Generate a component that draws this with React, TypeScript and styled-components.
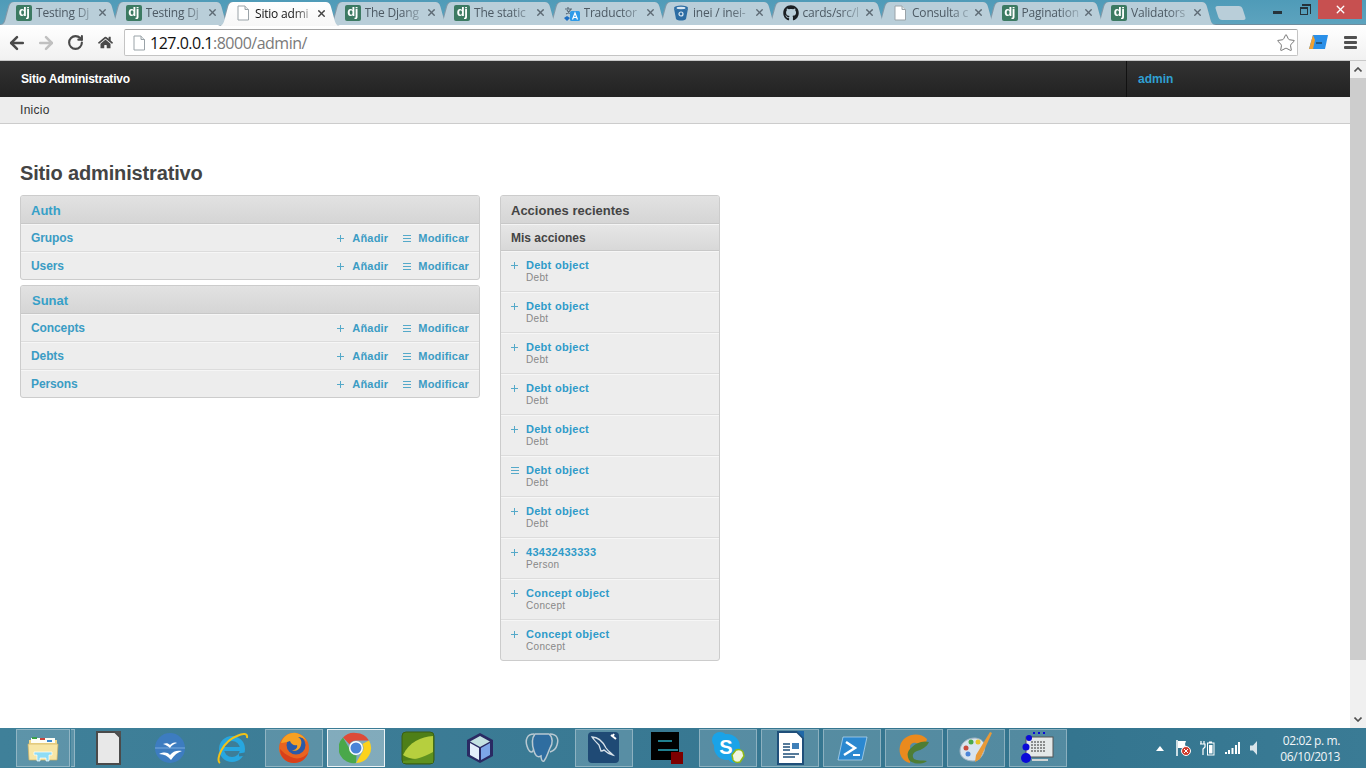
import React from 'react';
import styled, { createGlobalStyle, css } from 'styled-components';
import { ArrowLeft, ArrowRight, RotateCw, Star, X } from 'lucide-react';
import { FaGithub, FaHome } from 'react-icons/fa';

const GlobalStyle = createGlobalStyle`
	html, body {
		margin: 0;
		height: 100%;
		overflow: hidden;
		background: #fff;
		font-family: "Liberation Sans", Arial, sans-serif;
	}
	* { box-sizing: border-box; }
`;

const Screen = styled.div`
	display: flex;
	flex-direction: column;
	height: 100vh;
`;

/* ---------- browser chrome ---------- */
const TabStrip = styled.div`
	display: flex;
	height: 25px;
	background: linear-gradient(#4f9bb8, #5da3be);
	border-bottom: 1px solid #6f8d9e;
`;
const Tabs = styled.div`
	display: flex;
	padding-top: 1px;
	filter: drop-shadow(0.6px 0 0 #7f98a8) drop-shadow(-0.6px 0 0 #7f98a8);
`;
const Tab = styled.div<{ $active?: boolean }>`
	position: relative;
	display: flex;
	align-items: center;
	flex: none;
	width: 121px;
	height: 24px;
	margin-right: -11.5px;
	padding: 0 13px 1px 16px;
	background: #b9ced9;
	clip-path: path('M0 24 C4 24 5 21 6 17 L9 6 C10 2 12 1 15 1 L106 1 C109 1 111 2 112 6 L115 17 C116 21 117 24 121 24 Z');
	${p =>
		p.$active &&
		css`
			z-index: 2;
			height: 25px;
			margin-bottom: -1px;
			background: linear-gradient(#fff, #f7f7f7);
			clip-path: path('M0 25 C4 25 5 21 6 17 L9 6 C10 2 12 1 15 1 L106 1 C109 1 111 2 112 6 L115 17 C116 21 117 25 121 25 Z');
		`}
`;
const TabTitle = styled.span<{ $active?: boolean }>`
	flex: 1;
	min-width: 0;
	margin-left: 4px;
	white-space: nowrap;
	font: 12px 'Open Sans', sans-serif;
	letter-spacing: -0.2px;
	color: ${p => (p.$active ? '#111' : '#4d5a64')};
	mask-image: linear-gradient(to right, #000 65%, rgba(0, 0, 0, 0.25) 100%);
`;
const TabClose = styled.span<{ $active?: boolean }>`
	display: flex;
	flex: none;
	margin-left: 4px;
	color: ${p => (p.$active ? '#444' : '#5d6a74')};
`;
const DjIcon = styled.span`
	flex: none;
	width: 16px;
	height: 16px;
	border-radius: 2px;
	background: #3c7a62;
	color: #fff;
	font: bold 13px/14px 'Liberation Sans', sans-serif;
	text-align: center;
	letter-spacing: -0.5px;
`;
const NewTab = styled.div`
	flex: none;
	width: 27px;
	height: 14px;
	margin: 6px 0 0 12px;
	border-radius: 3px;
	background: #b9ced9;
	transform: skewX(18deg);
`;
const WindowControls = styled.div`
	display: flex;
	align-items: flex-start;
	margin-left: auto;
	margin-right: 4px;
`;
const WindowButton = styled.div<{ $close?: boolean }>`
	display: flex;
	align-items: center;
	justify-content: center;
	height: 19px;
	width: ${p => (p.$close ? '44px' : '27px')};
	background: ${p => (p.$close ? '#c75050' : 'transparent')};
	color: #fff;
`;
const MinGlyph = styled.span`
	width: 9px;
	height: 3px;
	margin-top: 5px;
	background: #26333a;
`;
const MaxGlyph = styled.span`
	position: relative;
	width: 8px;
	height: 8px;
	margin: 3px 0 0 -2px;
	border: 1px solid #26333a;
	border-top-width: 2px;
	&::after {
		content: '';
		position: absolute;
		left: 1px;
		top: -5px;
		width: 8px;
		height: 8px;
		border: 1px solid #26333a;
		border-top-width: 2px;
		border-left: 0;
		border-bottom: 0;
	}
`;

const Toolbar = styled.div`
	display: flex;
	align-items: flex-start;
	height: 36px;
	padding: 4px 9px 0 2px;
	background: linear-gradient(#fff, #f1f1f1);
	border-bottom: 1px solid #c8c8c8;
`;
const NavButton = styled.span<{ $off?: boolean }>`
	display: flex;
	align-items: center;
	justify-content: center;
	flex: none;
	width: 29.5px;
	height: 27px;
	color: ${p => (p.$off ? '#c0c0c0' : '#4a4a4a')};
`;
const AddressBar = styled.div`
	display: flex;
	align-items: center;
	flex: 1;
	height: 27px;
	margin: 0 10px 0 4px;
	padding: 0 1px 0 6px;
	background: #fff;
	border: 1px solid #c4c4c4;
	border-top-color: #a4a4a4;
	border-radius: 2px;
	font: 16px 'Open Sans', sans-serif;
	letter-spacing: -0.5px;
`;
const UrlHost = styled.span`
	margin-left: 3px;
	color: #111;
`;
const UrlPath = styled.span`
	color: #7a7a7a;
`;
const StarSlot = styled.span`
	display: flex;
	margin-left: auto;
	color: #777;
`;
const ExtensionSlot = styled.span`
	display: flex;
	flex: none;
	margin-top: 5px;
`;
const MenuBars = styled.span`
	display: flex;
	flex-direction: column;
	gap: 2px;
	width: 13px;
	margin: 7px 0 0 16px;
	& > i {
		height: 3px;
		background: #505050;
		border-radius: 1px;
	}
`;

/* ---------- admin page ---------- */
const Viewport = styled.div`
	display: flex;
	flex: 1;
	min-height: 0;
`;
const Page = styled.div`
	flex: 1;
	min-width: 0;
	background: #fff;
`;
const AdminHeader = styled.header`
	display: flex;
	align-items: center;
	height: 36px;
	background: linear-gradient(#333, #222);
	font-weight: bold;
	font-size: 12px;
`;
const Branding = styled.div`
	flex: 1;
	padding-left: 21px;
	letter-spacing: -0.2px;
	color: #fff;
`;
const UserTools = styled.div`
	align-self: stretch;
	display: flex;
	align-items: center;
	width: 224px;
	padding-left: 11px;
	border-left: 1px solid #111;
	color: #30a0d3;
`;
const Breadcrumbs = styled.div`
	height: 27px;
	padding: 6px 20px 0;
	background: #ededed;
	border-bottom: 1px solid #ccc;
	font-size: 12px;
	line-height: 14px;
	letter-spacing: 0.3px;
	color: #333;
`;
const Content = styled.main`
	padding: 37px 20px 0;
`;
const Title = styled.h1`
	margin: 0 0 10px;
	font-size: 20px;
	line-height: 24px;
	font-weight: bold;
	letter-spacing: -0.15px;
	color: #444;
`;
const Columns = styled.div`
	display: flex;
	align-items: flex-start;
	gap: 20px;
`;
const ModuleColumn = styled.div`
	display: flex;
	flex-direction: column;
	gap: 5px;
	width: 460px;
`;
const Module = styled.section`
	border: 1px solid #ccc;
	border-radius: 3px;
	background: #ededed;
	overflow: hidden;
`;
const ModuleHead = styled.h2<{ $dark?: boolean; $inset?: number }>`
	display: flex;
	align-items: center;
	height: 28px;
	margin: 0;
	padding: 1px 10px 0 ${p => p.$inset ?? 10}px;
	background: linear-gradient(#e2e2e2, #d5d5d5);
	border-bottom: 1px solid #c8c8c8;
	font-size: 13px;
	font-weight: bold;
	color: ${p => (p.$dark ? '#444' : '#36a0c8')};
`;
const ModuleSubHead = styled.h3`
	display: flex;
	align-items: center;
	height: 27px;
	margin: 0;
	padding: 0 10px;
	background: linear-gradient(#e6e6e6, #d8d8d8);
	border-top: 1px solid #f4f4f4;
	border-bottom: 1px solid #c8c8c8;
	font-size: 12px;
	font-weight: bold;
	color: #444;
`;
const ModelRow = styled.div`
	display: flex;
	align-items: center;
	height: 28px;
	padding: 0 10px;
	border-top: 1px solid #f6f6f6;
	border-bottom: 1px solid #dcdcdc;
	&:last-child {
		height: 27px;
		border-bottom: 0;
	}
`;
const ModelName = styled.span`
	flex: 1;
	font-size: 12px;
	font-weight: bold;
	letter-spacing: -0.1px;
	color: #3b9cc4;
`;
const RowAction = styled.span<{ $wide?: boolean }>`
	display: flex;
	align-items: center;
	margin-left: ${p => (p.$wide ? '15px' : '0')};
	font-size: 11px;
	font-weight: bold;
	letter-spacing: 0.2px;
	color: #3b9cc4;
`;
const ActionGlyph = styled.svg<{ $gap: number }>`
	display: block;
	flex: none;
	margin-right: ${p => p.$gap}px;
	stroke: #55a9c9;
	stroke-width: 1;
	fill: none;
`;
const RecentColumn = styled.div`
	width: 220px;
`;
const RecentItem = styled.div`
	display: grid;
	grid-template-columns: 15px 1fr;
	align-content: start;
	height: 41px;
	padding: 7px 10px 0;
	border-top: 1px solid #f6f6f6;
	border-bottom: 1px solid #dcdcdc;
	&:last-child {
		height: 40px;
		border-bottom: 0;
	}
`;
const RecentGlyph = styled.span`
	display: flex;
	align-items: center;
	height: 13px;
`;
const RecentTitle = styled.span`
	font-size: 11px;
	line-height: 13px;
	font-weight: bold;
	letter-spacing: 0.28px;
	color: #2f9bc9;
`;
const RecentType = styled.span`
	grid-column: 2;
	font-size: 10px;
	line-height: 11px;
	letter-spacing: 0.3px;
	color: #888;
`;

const ScrollBar = styled.div`
	display: flex;
	flex-direction: column;
	flex: none;
	width: 16px;
	background: #f0f0f0;
`;
const ScrollArrow = styled.div<{ $end?: boolean }>`
	display: flex;
	align-items: center;
	justify-content: center;
	flex: none;
	height: 17px;
	margin-top: ${p => (p.$end ? 'auto' : '0')};
`;
const ScrollThumb = styled.div`
	flex: none;
	height: 582px;
	background: #cdcdcd;
`;

/* ---------- taskbar ---------- */
const Taskbar = styled.footer`
	display: flex;
	align-items: center;
	flex: none;
	height: 40px;
	padding-left: 16px;
	background: linear-gradient(90deg, #3f8099, #3a7a94 40%, #33748e 75%, #3a7b95);
`;
const TaskSlot = styled.div<{ $state?: 'open' | 'focus'; $narrow?: boolean }>`
	display: flex;
	align-items: center;
	justify-content: center;
	flex: none;
	width: ${p => (p.$narrow ? '54px' : '58px')};
	height: 38px;
	margin-right: ${p => (p.$narrow ? '1px' : '4px')};
	${p =>
		p.$state === 'open' &&
		css`
			background: rgba(255, 255, 255, 0.16);
			border: 1px solid rgba(255, 255, 255, 0.32);
		`}
	${p =>
		p.$state === 'focus' &&
		css`
			background: rgba(255, 255, 255, 0.36);
			border: 1px solid rgba(255, 255, 255, 0.85);
		`}
`;
const TaskStack = styled.div`
	flex: none;
	width: 4px;
	height: 38px;
	margin-right: 4px;
	background: rgba(255, 255, 255, 0.16);
	border: 1px solid rgba(255, 255, 255, 0.32);
	border-left: 0;
`;
const Tray = styled.div`
	display: flex;
	align-items: center;
	margin-left: auto;
	height: 100%;
`;
const TrayIcon = styled.span<{ $gap: number }>`
	display: flex;
	margin-left: ${p => p.$gap}px;
	color: #fff;
`;
const Clock = styled.div`
	width: 88px;
	margin-left: 20px;
	padding: 1px 26px 0 0;
	white-space: nowrap;
	text-align: right;
	font: 12px/16px 'Open Sans', sans-serif;
	letter-spacing: -0.4px;
	color: #f2f6f8;
`;

const DocFavicon = ({ size = 16 }: { size?: number }) => (
	<svg width={size} height={size} viewBox="0 0 16 16" style={{ flex: 'none' }}>
		<path d="M3 1h7l3.500 3.500V15H3z" fill="#fff" stroke="#9aa3a8" />
		<path d="M10 1v3.500h3.500" fill="#e6e9ea" stroke="#9aa3a8" />
	</svg>
);
const TranslateFavicon = () => (
	<svg width="16" height="16" viewBox="0 0 16 16" style={{ flex: 'none' }}>
		<path d="M1 4h7M4 2v2M2 9c3-1 4-3 5-5M3 5c1 2 2 3 4 4" stroke="#5b6b78" strokeWidth="1.200" fill="none" />
		<rect x="6" y="6" width="10" height="10" rx="1.500" fill="#2f9be8" />
		<path d="M8.500 14.500L11 8l2.500 6.500M9.500 12.500h3" stroke="#fff" strokeWidth="1.200" fill="none" />
		<path d="M0 13l3-2 3 2-3 3z" fill="#1d6fc4" />
	</svg>
);
const BucketFavicon = () => (
	<svg width="16" height="16" viewBox="0 0 16 16" style={{ flex: 'none' }}>
		<ellipse cx="8" cy="3" rx="7" ry="2.500" fill="#2b6ca3" />
		<path d="M1 3.500l2 10.500c2 2 8 2 10 0l2-10.500c-3 2-11 2-14 0z" fill="#2b6ca3" />
		<ellipse cx="8" cy="3" rx="4.500" ry="1.200" fill="#dbe8f2" />
		<circle cx="8" cy="9" r="2" fill="none" stroke="#dbe8f2" strokeWidth="1.200" />
	</svg>
);

const Shot = { width: 34, height: 34, viewBox: '0 0 34 34' };

const ExplorerIcon = () => (
	<svg {...Shot}>
		<path d="M3 9h28v20H3z" fill="#f1d98a" />
		<path d="M5 7h24v5H5z" fill="#fdfdf5" />
		<path d="M6 6h5v2H6z" fill="#3aa04a" />
		<path d="M14 7h5v2h-5z" fill="#c8443c" />
		<path d="M21 9h5v2h-5z" fill="#3d8ad0" />
		<path d="M2 13h30l-1 16H3z" fill="#f7e6a6" stroke="#cfb264" strokeWidth=".7" />
		<path d="M8 21h18v3h-3v6h-3v-3h-6v3h-3v-6H8z" fill="#8fdcf5" stroke="#fff" strokeWidth=".7" />
	</svg>
);
const LibreIcon = () => (
	<svg {...Shot}>
		<path d="M6 1h18l5 5v27H6z" fill="#e8e8e8" stroke="#4a4a4a" strokeWidth="2" />
		<path d="M24 0h6v6z" fill="#505050" />
	</svg>
);
const OfficeIcon = () => (
	<svg {...Shot}>
		<circle cx="17" cy="17" r="15" fill="#3d7cc0" />
		<path d="M2 17h30" stroke="#79aadd" strokeWidth="1" />
		<path d="M6 23c5-2 8-2 11 1 3-4 7-5 12-4-4 1-8 4-11 9-3-4-7-6-12-6z" fill="#fff" />
		<path d="M10 13c3-1 5-1 7 1 2-2 4-3 7-2-3 1-5 2-7 5-2-2-4-3-7-4z" fill="#fff" />
	</svg>
);
const IeIcon = () => (
	<svg {...Shot}>
		<circle cx="17" cy="18" r="10.500" fill="none" stroke="#27a7e0" strokeWidth="5" />
		<path d="M9 18h18" stroke="#27a7e0" strokeWidth="4" />
		<path d="M24 24l6-1" stroke="#3a7a94" strokeWidth="3" />
		<path d="M5 32C0 29 8 10 22 5c6-3 11-3 10 2" fill="none" stroke="#f2c218" strokeWidth="2" />
	</svg>
);
const FirefoxIcon = () => (
	<svg {...Shot}>
		<circle cx="17" cy="17" r="15" fill="#e8631f" />
		<circle cx="19" cy="14" r="9.500" fill="#2a5aa8" />
		<path d="M4 12c2-7 9-11 15-10 5 1 9 4 11 9-3-4-6-5-9-5 3 2 4 4 3 8-1 5-6 7-10 5 4 1 7-2 6-5-3 1-6-1-7-4-2 1-3 1-9 2z" fill="#f7a021" />
		<path d="M3 18c0 8 6 14 14 14 7 0 12-4 14-10-4 5-11 7-17 4-5-2-8-5-11-8z" fill="#d8401a" />
	</svg>
);
const ChromeIcon = () => (
	<svg {...Shot}>
		<path d="M17 2a15 15 0 0 1 13 7.500H17a7.500 7.500 0 0 0-6.500 3.700L4 6.500A15 15 0 0 1 17 2z" fill="#dd4b39" />
		<path d="M30 9.500A15 15 0 0 1 17 32l6.500-11.300A7.500 7.500 0 0 0 23.500 13L30 9.500z" fill="#fcd21c" />
		<path d="M17 32A15 15 0 0 1 4 6.500l6.500 11.300a7.500 7.500 0 0 0 7 6.700z" fill="#4aa84a" />
		<circle cx="17" cy="17" r="7" fill="#fff" />
		<circle cx="17" cy="17" r="5.500" fill="#4a84d8" />
	</svg>
);
const LeafIcon = () => (
	<svg {...Shot}>
		<rect x="1" y="1" width="32" height="32" rx="4" fill="#4e7f18" stroke="#3a5f12" />
		<path d="M2 24C8 11 20 6 32 5v20c-10 3-22 5-30-1z" fill="#b6cf3e" />
		<path d="M2 30c9-1 20-3 30-9v11H2z" fill="#5f9220" />
	</svg>
);
const CubeIcon = () => (
	<svg {...Shot}>
		<path d="M17 2l13 7v16l-13 7-13-7V9z" fill="#2a2a63" />
		<path d="M17 5l10 5.500-10 5.500-10-5.500z" fill="#c4e2e2" />
		<path d="M7 12l9 5v12l-9-5z" fill="#e4eefa" />
		<path d="M18 17l9-5v12l-9 5z" fill="#7da6e8" />
	</svg>
);
const ElephantIcon = () => (
	<svg {...Shot}>
		<path d="M9 3C2 3 0 9 2 15c1 4 4 8 6 5 1-2 1-4 2-6M25 3c7 0 9 5 7 11-1 4-4 6-7 7" fill="none" stroke="#b9c9d2" strokeWidth="1.500" />
		<path d="M10 3h14c4 3 4 10 1 14-2 4-3 9-6 13-2 1-3-2-3-5-4 2-6-1-7-5-2-6-3-12 1-17z" fill="#2f6da0" stroke="#b9c9d2" strokeWidth="1.500" />
	</svg>
);
const MysqlIcon = () => (
	<svg {...Shot}>
		<rect x="1" y="1" width="31" height="31" rx="4" fill="#1f4a75" />
		<path d="M5 6c6 0 11 5 14 11 2 3 5 5 7 7-4-1-7-3-9-5-1 1-2 1-3 1l-2-6C9 11 7 9 5 6z" fill="none" stroke="#d8e2ea" strokeWidth="1.300" />
		<path d="M24 4l5 4M27 3l-2 3" stroke="#fff" strokeWidth="2" />
	</svg>
);
const BlackIcon = () => (
	<svg {...Shot}>
		<rect x="2" y="1" width="28" height="28" fill="#000" />
		<rect x="9" y="9" width="14" height="2" fill="#1f7f8f" />
		<rect x="9" y="18" width="20" height="2" fill="#1f7f8f" />
		<rect x="22" y="21" width="12" height="12" fill="#7d0000" />
	</svg>
);
const SkypeIcon = () => (
	<svg {...Shot}>
		<circle cx="9" cy="9" r="8" fill="#1aa3e8" />
		<circle cx="24" cy="24" r="8" fill="#1aa3e8" />
		<circle cx="16" cy="16" r="13" fill="#1aa3e8" />
		<text x="15" y="23" textAnchor="middle" fontFamily="Liberation Sans" fontWeight="bold" fontSize="20" fill="#fff">S</text>
		<path d="M21 24l4-5c3-1 6 0 7 2l1 4-4 6c-3 1-6 0-7-2z" fill="#f2f5e0" stroke="#8fb817" strokeWidth="1.500" />
	</svg>
);
const WriterIcon = () => (
	<svg {...Shot}>
		<path d="M5 1h19l6 6v26H5z" fill="#fff" stroke="#1f4f7a" strokeWidth="2" />
		<path d="M24 0h7v7z" fill="#1f68a8" />
		<path d="M10 13h7M10 16h7M10 19h7" stroke="#1f4f7a" strokeWidth="1.500" />
		<rect x="19" y="12" width="7" height="6" fill="#3f7fb8" />
		<path d="M10 23h16M10 26h12" stroke="#1f4f7a" strokeWidth="1.500" />
	</svg>
);
const PowerShellIcon = () => (
	<svg {...Shot}>
		<path d="M8 6h24l-5 23H3z" fill="#2b88d0" stroke="#bcdcf4" strokeWidth=".7" />
		<path d="M11 11l9 6-11 7" fill="none" stroke="#fff" strokeWidth="2.500" />
		<path d="M18 24h7" stroke="#fff" strokeWidth="2" />
	</svg>
);
const PycharmIcon = () => (
	<svg {...Shot}>
		<path d="M30 8C22 0 6 3 3 15c-2 8 3 16 10 17V16c0-3 3-5 6-4l9 3z" fill="#ea8a1e" />
		<path d="M13 18c5-6 13-9 19-7-2 5-8 8-12 9-3 1-6 4-3 8 3 2 9 1 13 2-5 4-15 3-18-1-2-4-2-8 1-11z" fill="#4e7d35" />
	</svg>
);
const PaintIcon = () => (
	<svg {...Shot}>
		<path d="M16 7C7 7 1 13 1 20c0 7 7 10 13 10 5 0 8-3 10-7 3-6 3-15-8-16z" fill="#d8e4ee" stroke="#9fb3c2" />
		<circle cx="7" cy="17" r="2.500" fill="#c84a3c" />
		<circle cx="12" cy="11" r="2.500" fill="#4aa84a" />
		<circle cx="19" cy="11" r="2.500" fill="#e8c428" />
		<circle cx="9" cy="23" r="2.500" fill="#4a84d8" />
		<path d="M31 1l2 1-12 26-5 3 1-7z" fill="#e89a38" />
	</svg>
);
const DiagramIcon = () => (
	<svg {...Shot}>
		<rect x="5" y="6" width="27" height="20" fill="#e4e8e8" stroke="#555" />
		<path d="M10 11h15M10 14h15M10 17h15M10 20h15" stroke="#333" strokeDasharray="2 1" />
		<path d="M11 28h16v2H11z" fill="#cfd4d4" />
		<circle cx="8" cy="7" r="3" fill="#0a0ad8" />
		<circle cx="5" cy="16" r="3.500" fill="#0a0ad8" />
		<circle cx="5" cy="27" r="5" fill="#0a0ad8" />
		<path d="M12 2h2M17 2h2M22 2h2" stroke="#0a0ad8" strokeWidth="2" />
	</svg>
);

const FlagTray = () => (
	<svg width="16" height="18" viewBox="0 0 16 18">
		<path d="M2 1v16" stroke="#fff" strokeWidth="1.500" />
		<path d="M3 2h8l-1 3 1 4H3z" fill="#fff" />
		<circle cx="11" cy="12" r="4.500" fill="#d03a2c" stroke="#fff" />
		<path d="M9 10l4 4M13 10l-4 4" stroke="#fff" />
	</svg>
);
const PowerTray = () => (
	<svg width="16" height="16" viewBox="0 0 16 16">
		<path d="M2 1v3M5 1v3M1 4h5v3L4 9v6" stroke="#fff" strokeWidth="1.200" fill="none" />
		<rect x="8.500" y="3" width="6.500" height="12" fill="none" stroke="#fff" />
		<rect x="10" y="1.500" width="3" height="1.500" fill="#fff" />
		<rect x="10" y="5" width="3.500" height="8.500" fill="#fff" />
	</svg>
);
const SignalTray = () => (
	<svg width="16" height="12" viewBox="0 0 16 12">
		<path d="M1 10h2v2H1zM4 8h2v4H4zM7.500 6h2v6h-2zM11 3h2v9h-2zM14 0h2v12h-2z" fill="#fff" />
	</svg>
);
const SpeakerTray = () => (
	<svg width="9" height="14" viewBox="0 0 9 14">
		<path d="M1 4.500h3L8 0v14L4 9.500H1z" fill="#d8e4ea" />
	</svg>
);
const TrayCaret = () => (
	<svg width="8" height="5" viewBox="0 0 8 5">
		<path d="M4 0l4 5H0z" fill="#fff" />
	</svg>
);
const ChevronGlyph = ({ up }: { up?: boolean }) => (
	<svg width="8" height="5" viewBox="0 0 8 5">
		<path d={up ? 'M0.500 4.500L4 1l3.500 3.500' : 'M0.500 0.500L4 4l3.500-3.500'} fill="none" stroke="#505050" strokeWidth="1.600" />
	</svg>
);
const PlusGlyph = () => (
	<ActionGlyph $gap={8} width="7" height="7" viewBox="0 0 7 7">
		<path d="M3.500 0v7M0 3.500h7" />
	</ActionGlyph>
);
const ListGlyph = () => (
	<ActionGlyph $gap={7} width="8" height="7" viewBox="0 0 8 7">
		<path d="M0 .500h8M0 3.500h8M0 6.500h8" />
	</ActionGlyph>
);
const ExtensionIcon = () => (
	<svg width="20" height="16" viewBox="0 0 20 16">
		<path d="M5 1h15l-3 14H1z" fill="#2a8fe8" />
		<path d="M5 1L1 15h4l2-9z" fill="#f0a030" />
		<path d="M8 9h6" stroke="#123" />
	</svg>
);

const tabList = [
	{ title: 'Testing Dj', icon: 'dj' },
	{ title: 'Testing Dj', icon: 'dj' },
	{ title: 'Sitio admi', icon: 'doc', active: true },
	{ title: 'The Djang', icon: 'dj' },
	{ title: 'The static', icon: 'dj' },
	{ title: 'Traductor', icon: 'translate' },
	{ title: 'inei / inei-', icon: 'bucket' },
	{ title: 'cards/src/l', icon: 'github' },
	{ title: 'Consulta c', icon: 'doc' },
	{ title: 'Pagination', icon: 'dj' },
	{ title: 'Validators', icon: 'dj' }
];

const TabIcon = ({ kind }: { kind: string }) => {
	if (kind === 'dj') return <DjIcon>dj</DjIcon>;
	if (kind === 'doc') return <DocFavicon />;
	if (kind === 'translate') return <TranslateFavicon />;
	if (kind === 'bucket') return <BucketFavicon />;
	return <FaGithub size={16} color="#1b1f23" style={{ flex: 'none' }} />;
};

const modules = [
	{ name: 'Auth', inset: 10, models: ['Grupos', 'Users'] },
	{ name: 'Sunat', inset: 11, models: ['Concepts', 'Debts', 'Persons'] }
];

const recent = [
	{ title: 'Debt object', type: 'Debt' },
	{ title: 'Debt object', type: 'Debt' },
	{ title: 'Debt object', type: 'Debt' },
	{ title: 'Debt object', type: 'Debt' },
	{ title: 'Debt object', type: 'Debt' },
	{ title: 'Debt object', type: 'Debt', changed: true },
	{ title: 'Debt object', type: 'Debt' },
	{ title: '43432433333', type: 'Person' },
	{ title: 'Concept object', type: 'Concept' },
	{ title: 'Concept object', type: 'Concept' }
];

const taskItems: { icon: React.FC; state?: 'open' | 'focus' }[] = [
	{ icon: LibreIcon },
	{ icon: OfficeIcon },
	{ icon: IeIcon },
	{ icon: FirefoxIcon, state: 'open' },
	{ icon: ChromeIcon, state: 'focus' },
	{ icon: LeafIcon },
	{ icon: CubeIcon },
	{ icon: ElephantIcon },
	{ icon: MysqlIcon, state: 'open' },
	{ icon: BlackIcon },
	{ icon: SkypeIcon, state: 'open' },
	{ icon: WriterIcon, state: 'open' },
	{ icon: PowerShellIcon, state: 'open' },
	{ icon: PycharmIcon, state: 'open' },
	{ icon: PaintIcon, state: 'open' },
	{ icon: DiagramIcon, state: 'open' }
];

const App = () => (
	<Screen>
		<GlobalStyle />
		<TabStrip>
			<Tabs>
				{tabList.map((tab, i) => (
					<Tab key={i} $active={tab.active}>
						<TabIcon kind={tab.icon} />
						<TabTitle $active={tab.active}>{tab.title}</TabTitle>
						<TabClose $active={tab.active}>
							<X size={11} strokeWidth={3} />
						</TabClose>
					</Tab>
				))}
			</Tabs>
			<NewTab />
			<WindowControls>
				<WindowButton>
					<MinGlyph />
				</WindowButton>
				<WindowButton>
					<MaxGlyph />
				</WindowButton>
				<WindowButton $close>
					<X size={13} strokeWidth={2.5} />
				</WindowButton>
			</WindowControls>
		</TabStrip>
		<Toolbar>
			<NavButton>
				<ArrowLeft size={20} strokeWidth={3} />
			</NavButton>
			<NavButton $off>
				<ArrowRight size={20} strokeWidth={3} />
			</NavButton>
			<NavButton>
				<RotateCw size={17} strokeWidth={3} />
			</NavButton>
			<NavButton>
				<FaHome size={15} />
			</NavButton>
			<AddressBar>
				<DocFavicon />
				<UrlHost>127.0.0.1</UrlHost>
				<UrlPath>:8000/admin/</UrlPath>
				<StarSlot>
					<Star size={20} strokeWidth={1.2} />
				</StarSlot>
			</AddressBar>
			<ExtensionSlot>
				<ExtensionIcon />
			</ExtensionSlot>
			<MenuBars>
				<i />
				<i />
				<i />
			</MenuBars>
		</Toolbar>
		<Viewport>
			<Page>
				<AdminHeader>
					<Branding>Sitio Administrativo</Branding>
					<UserTools>admin</UserTools>
				</AdminHeader>
				<Breadcrumbs>Inicio</Breadcrumbs>
				<Content>
					<Title>Sitio administrativo</Title>
					<Columns>
						<ModuleColumn>
							{modules.map(mod => (
								<Module key={mod.name}>
									<ModuleHead $inset={mod.inset}>{mod.name}</ModuleHead>
									{mod.models.map(model => (
										<ModelRow key={model}>
											<ModelName>{model}</ModelName>
											<RowAction>
												<PlusGlyph />
												Añadir
											</RowAction>
											<RowAction $wide>
												<ListGlyph />
												Modificar
											</RowAction>
										</ModelRow>
									))}
								</Module>
							))}
						</ModuleColumn>
						<RecentColumn>
							<Module>
								<ModuleHead $dark>Acciones recientes</ModuleHead>
								<ModuleSubHead>Mis acciones</ModuleSubHead>
								{recent.map((item, i) => (
									<RecentItem key={i}>
										<RecentGlyph>{item.changed ? <ListGlyph /> : <PlusGlyph />}</RecentGlyph>
										<RecentTitle>{item.title}</RecentTitle>
										<RecentType>{item.type}</RecentType>
									</RecentItem>
								))}
							</Module>
						</RecentColumn>
					</Columns>
				</Content>
			</Page>
			<ScrollBar>
				<ScrollArrow>
					<ChevronGlyph up />
				</ScrollArrow>
				<ScrollThumb />
				<ScrollArrow $end>
					<ChevronGlyph />
				</ScrollArrow>
			</ScrollBar>
		</Viewport>
		<Taskbar>
			<TaskSlot $state="open" $narrow>
				<ExplorerIcon />
			</TaskSlot>
			<TaskStack />
			{taskItems.map((item, i) => (
				<TaskSlot key={i} $state={item.state}>
					<item.icon />
				</TaskSlot>
			))}
			<Tray>
				<TrayIcon $gap={0}>
					<TrayCaret />
				</TrayIcon>
				<TrayIcon $gap={11}>
					<FlagTray />
				</TrayIcon>
				<TrayIcon $gap={8}>
					<PowerTray />
				</TrayIcon>
				<TrayIcon $gap={9}>
					<SignalTray />
				</TrayIcon>
				<TrayIcon $gap={9}>
					<SpeakerTray />
				</TrayIcon>
				<Clock>
					02:02 p. m.
					<br />
					06/10/2013
				</Clock>
			</Tray>
		</Taskbar>
	</Screen>
);

export default App;
